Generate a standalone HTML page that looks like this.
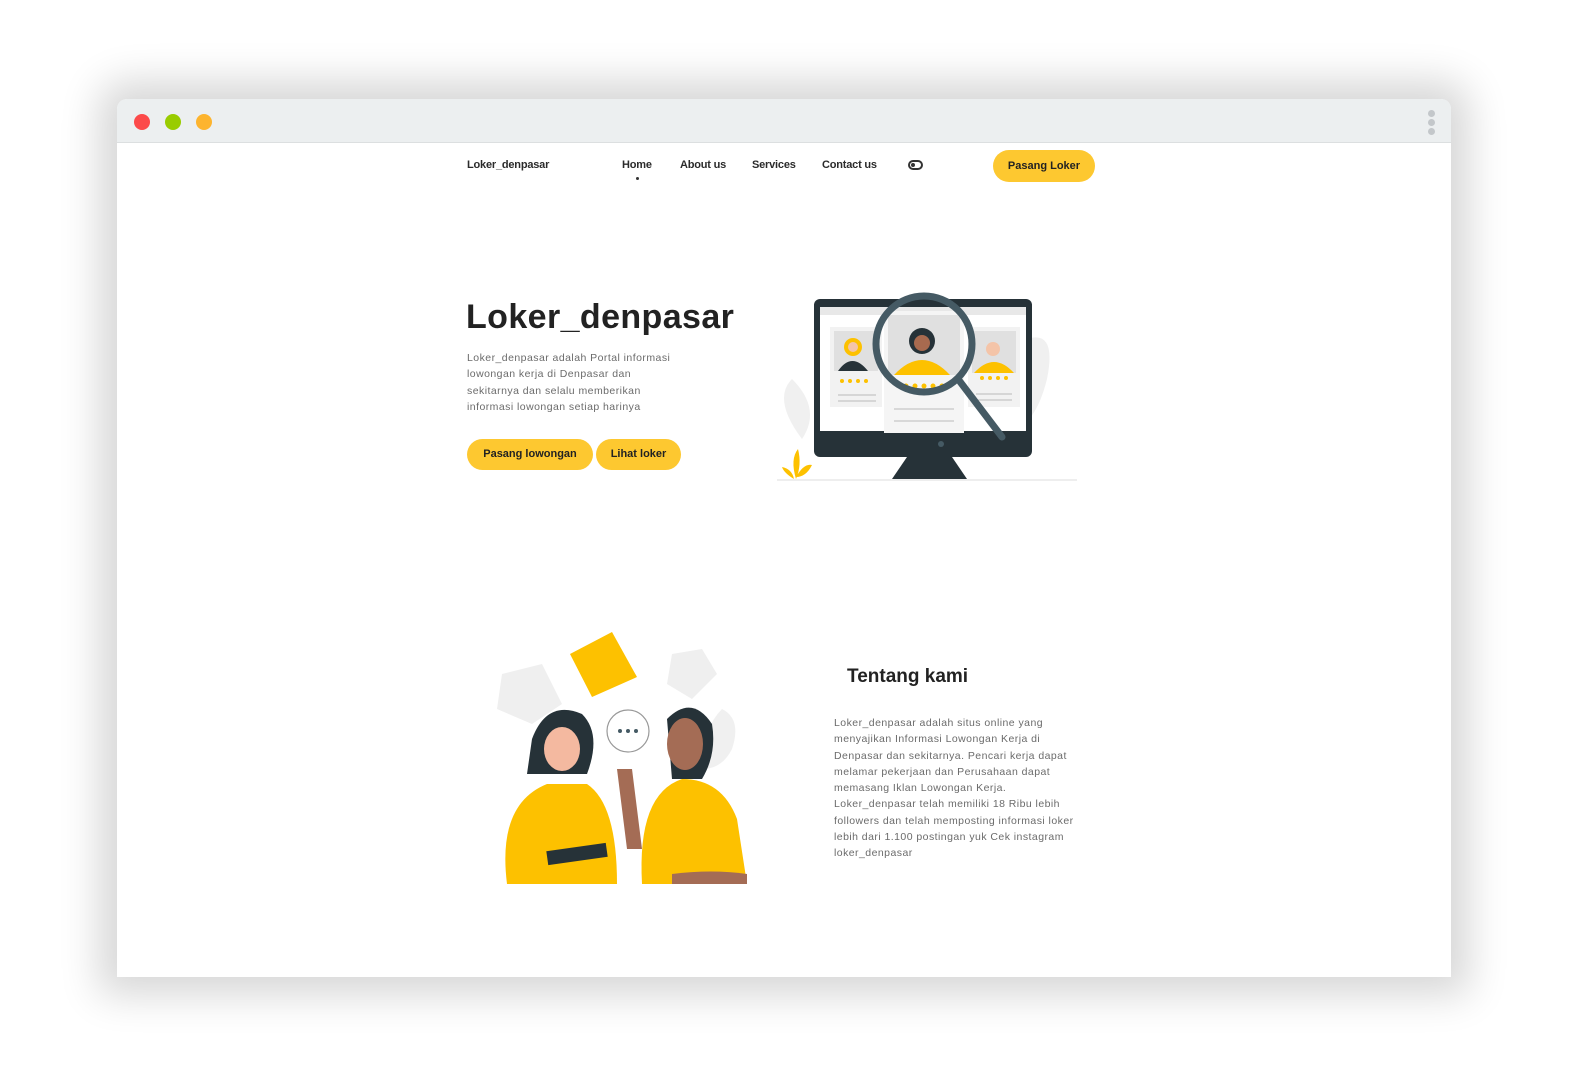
<!DOCTYPE html>
<html><head><meta charset="utf-8">
<style>
*{margin:0;padding:0;box-sizing:border-box}
body{width:1596px;height:1080px;background:#fff;font-family:"Liberation Sans",sans-serif;position:relative;overflow:hidden}
.win{position:absolute;left:117px;top:99px;width:1334px;height:878px;background:#fff;border-radius:10px 10px 0 0;box-shadow:0 0 40px 18px rgba(0,0,0,.16);overflow:hidden}
.bar{height:44px;background:#eceff0;border-bottom:1px solid #dcdfe0;position:relative}
.dot{position:absolute;top:15px;width:16px;height:16px;border-radius:50%}
.vd{position:absolute;right:16px;width:7px;height:7px;border-radius:50%;background:#c3c7ca}
.abs{position:absolute}
.nav{font-size:11px;font-weight:bold;color:#2b2b2b;letter-spacing:-.2px}
.btn{position:absolute;background:#fdc830;border-radius:16px;font-weight:bold;font-size:11px;color:#222;text-align:center}
p.t{font-size:10.5px;color:#6b6b6b;line-height:16.3px;letter-spacing:.45px;white-space:nowrap}
</style></head><body>
<div class="win">
 <div class="bar">
  <div class="dot" style="left:17px;background:#fc4a4a"></div>
  <div class="dot" style="left:48px;background:#99cc00"></div>
  <div class="dot" style="left:79px;background:#fdb42e"></div>
  <div class="vd" style="top:11px"></div><div class="vd" style="top:20px"></div><div class="vd" style="top:29px"></div>
 </div>
 <div class="abs nav" style="left:350px;top:60px">Loker_denpasar</div>
 <div class="abs nav" style="left:505px;top:60px">Home</div>
 <div class="abs" style="left:519px;top:78px;width:3px;height:3px;border-radius:50%;background:#333"></div>
 <div class="abs nav" style="left:563px;top:60px">About us</div>
 <div class="abs nav" style="left:635px;top:60px">Services</div>
 <div class="abs nav" style="left:705px;top:60px">Contact us</div>
 <div class="abs" style="left:791px;top:61px;width:15px;height:10px;border:2px solid #333;border-radius:5px"><div style="width:4px;height:4px;background:#333;border-radius:50%;margin:1px"></div></div>
 <div class="btn" style="left:876px;top:51px;width:102px;height:32px;line-height:32px;border-radius:16px">Pasang Loker</div>

 <div class="abs" style="left:349px;top:199px;font-size:34px;font-weight:bold;color:#222;letter-spacing:.4px">Loker_denpasar</div>
 <p class="t abs" style="left:350px;top:251px">Loker_denpasar adalah Portal informasi<br>lowongan kerja di Denpasar dan<br>sekitarnya dan selalu memberikan<br>informasi lowongan setiap harinya</p>
 <div class="btn" style="left:350px;top:340px;width:126px;height:31px;line-height:31px">Pasang lowongan</div>
 <div class="btn" style="left:479px;top:340px;width:85px;height:31px;line-height:31px">Lihat loker</div>

 <svg class="abs" style="left:655px;top:190px" width="320" height="195" viewBox="0 0 320 195">
  <path d="M255 50 q30 -10 20 40 q-10 40 -30 50 q-5 -50 10 -90z" fill="#f0f0f0"/>
  <path d="M20 90 q-20 20 10 60 q20 -30 -10 -60z" fill="#f0f0f0"/>
  <rect x="42" y="10" width="218" height="158" rx="6" fill="#263238"/>
  <rect x="48" y="18" width="206" height="124" fill="#fff"/>
  <rect x="48" y="18" width="206" height="8" fill="#e8e8e8"/>
  <rect x="58" y="38" width="52" height="80" fill="#f2f2f2"/>
  <rect x="62" y="42" width="44" height="40" fill="#e0e0e0"/>
  <path d="M66 82 q14 -20 30 0z" fill="#263238"/><circle cx="81" cy="58" r="9" fill="#fdc100"/><circle cx="81" cy="58" r="5" fill="#f4c4a8"/>
  <rect x="196" y="38" width="52" height="80" fill="#f2f2f2"/>
  <rect x="200" y="42" width="44" height="42" fill="#e0e0e0"/>
  <path d="M202 84 q20 -22 40 0z" fill="#fdc100"/><circle cx="221" cy="60" r="7" fill="#f4c4a8"/>
  <rect x="112" y="22" width="80" height="122" fill="#f5f5f5"/>
  <rect x="116" y="26" width="72" height="60" fill="#e0e0e0"/>
  <path d="M122 86 q28 -30 56 0z" fill="#fdc100"/><circle cx="150" cy="52" r="13" fill="#263238"/><circle cx="150" cy="54" r="8" fill="#a86a4f"/>
  <g fill="#fdc100"><circle cx="70" cy="92" r="2"/><circle cx="78" cy="92" r="2"/><circle cx="86" cy="92" r="2"/><circle cx="94" cy="92" r="2"/><circle cx="134" cy="97" r="2.5"/><circle cx="143" cy="97" r="2.5"/><circle cx="152" cy="97" r="2.5"/><circle cx="161" cy="97" r="2.5"/><circle cx="170" cy="97" r="2.5"/><circle cx="210" cy="89" r="2"/><circle cx="218" cy="89" r="2"/><circle cx="226" cy="89" r="2"/><circle cx="234" cy="89" r="2"/></g>
  <g stroke="#bbb" stroke-width="1"><line x1="66" y1="106" x2="104" y2="106"/><line x1="66" y1="112" x2="104" y2="112"/><line x1="122" y1="120" x2="182" y2="120"/><line x1="122" y1="132" x2="182" y2="132"/><line x1="204" y1="105" x2="240" y2="105"/><line x1="204" y1="111" x2="240" y2="111"/></g>
  <circle cx="152" cy="55" r="48" fill="none" stroke="#455a64" stroke-width="7"/>
  <line x1="186" y1="90" x2="230" y2="148" stroke="#455a64" stroke-width="7" stroke-linecap="round"/>
  <circle cx="169" cy="155" r="3" fill="#455a64"/>
  <path d="M135 168 h45 l15 22 h-75z" fill="#263238"/>
  <line x1="5" y1="191" x2="305" y2="191" stroke="#ddd"/>
  <path d="M24 190 q-6 -20 2 -30 q4 16 -2 30z M24 188 q8 -14 16 -12 q-6 12 -16 12z M22 190 q-10 -6 -12 -12 q10 2 12 12z" fill="#fdc100"/>
 </svg>

 <svg class="abs" style="left:375px;top:530px" width="270" height="260" viewBox="0 0 270 260">
  <path d="M10 45 l40 -10 l20 40 l-30 20 l-35 -15z" fill="#efefef"/>
  <path d="M180 25 l30 -5 l15 25 l-25 25 l-25 -15z" fill="#efefef"/>
  <path d="M78 25 l42 -22 l25 45 l-45 20z" fill="#fdc100"/>
  <path d="M230 80 q20 10 10 40 q-10 20 -30 20 q0 -40 20 -60z" fill="#f0f0f0"/>
  <circle cx="136" cy="102" r="21" fill="#fff" stroke="#999" stroke-width="1.2"/>
  <g fill="#455a64"><circle cx="128" cy="102" r="2"/><circle cx="136" cy="102" r="2"/><circle cx="144" cy="102" r="2"/></g>
  <path d="M40 110 q15 -40 50 -25 q20 20 5 60 h-60z" fill="#263238"/>
  <ellipse cx="70" cy="120" rx="18" ry="22" fill="#f4b9a0"/>
  <path d="M15 255 q-10 -80 40 -100 h40 q30 20 30 100z" fill="#fdc100"/>
  <rect x="55" y="218" width="60" height="14" fill="#263238" transform="rotate(-8 85 225)"/>
  <path d="M175 90 q25 -25 45 5 q5 30 -10 55 h-30z" fill="#263238"/>
  <ellipse cx="193" cy="115" rx="18" ry="26" fill="#a46c55"/>
  <path d="M125 140 l10 80 h15 l-10 -80z" fill="#a46c55"/>
  <path d="M150 255 q-5 -90 40 -105 q40 0 55 40 l10 65z" fill="#fdc100"/>
  <path d="M180 245 q40 -5 75 0 v10 h-75z" fill="#a46c55"/>
 </svg>

 <div class="abs" style="left:730px;top:567px;font-size:19px;font-weight:bold;color:#222">Tentang kami</div>
 <p class="t abs" style="left:717px;top:616px">Loker_denpasar adalah situs online yang<br>menyajikan Informasi Lowongan Kerja di<br>Denpasar dan sekitarnya. Pencari kerja dapat<br>melamar pekerjaan dan Perusahaan dapat<br>memasang Iklan Lowongan Kerja.<br>Loker_denpasar telah memiliki 18 Ribu lebih<br>followers dan telah memposting informasi loker<br>lebih dari 1.100 postingan yuk Cek instagram<br>loker_denpasar</p>
</div>
</body></html>
